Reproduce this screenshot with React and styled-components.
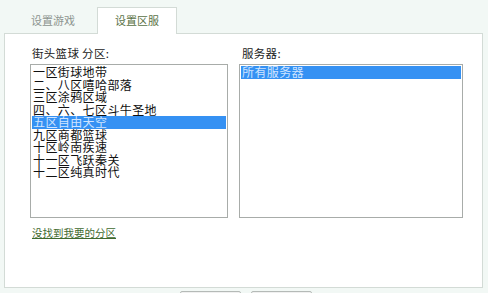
import React, { useState } from 'react';
import styled, { createGlobalStyle } from 'styled-components';

const GlobalStyle = createGlobalStyle`
  html, body {
    margin: 0;
    padding: 0;
    background: #f2f8f5;
    font-family: "Noto Sans CJK SC", "Liberation Sans", sans-serif;
  }
`;

const Page = styled.div`
  width: 488px;
  height: 293px;
  overflow: hidden;
  background: #f2f8f5;
`;

const TabBar = styled.div`
  display: flex;
  align-items: flex-end;
  height: 33px;
  padding-left: 12px;
  gap: 3px;
`;

const Tab = styled.div`
  position: relative;
  width: ${p => (p.$active ? '78px' : '80px')};
  height: ${p => (p.$active ? '24px' : '20px')};
  display: flex;
  align-items: center;
  justify-content: center;
  font-size: 11px;
  color: ${p => (p.$active ? '#5a7246' : '#8c948f')};
  background: ${p => (p.$active ? '#fff' : 'transparent')};
  border: ${p => (p.$active ? '1px solid #d3dbd6' : '1px solid transparent')};
  border-bottom: none;
  margin-bottom: ${p => (p.$active ? '-1px' : '0')};
  padding-bottom: ${p => (p.$active ? '2px' : '3px')};
  box-sizing: content-box;
  z-index: 1;
`;

const Panel = styled.div`
  margin-left: 4px;
  width: 479px;
  height: 255px;
  background: #fff;
  border: 1px solid #d3dbd6;
  padding: 12px 0 0 25px;
  box-sizing: border-box;
  display: flex;
  flex-direction: column;
`;

const Columns = styled.div`
  display: flex;
  gap: 11px;
`;

const Column = styled.div`
  display: flex;
  flex-direction: column;
  width: ${p => p.$width}px;
`;

const Label = styled.div`
  font-size: 11.5px;
  line-height: 15px;
  height: 18px;
  padding-left: ${p => p.$indent || 2}px;
  color: #222;
  letter-spacing: 0.3px;
`;

const ListBox = styled.div`
  height: 154px;
  border: 1px solid #a8aca9;
  background: #fff;
  padding: 1px;
  box-sizing: border-box;
`;

const Item = styled.div`
  font-size: 12px;
  line-height: 12.5px;
  height: 12.5px;
  padding-left: 1px;
  letter-spacing: 0.4px;
  white-space: nowrap;
  color: ${p => (p.$selected ? '#cfe4ff' : '#111')};
  background: ${p => (p.$selected ? '#3591f3' : 'transparent')};
  cursor: default;
`;

const Link = styled.a`
  margin-top: 7px;
  margin-left: 2px;
  font-size: 10.5px;
  color: #3f6a2f;
  text-decoration: underline;
  width: fit-content;
  cursor: pointer;
`;

const Footer = styled.div`
  display: flex;
  gap: 10px;
  padding: 3px 0 0 180px;
`;

const FooterButton = styled.div`
  width: 59px;
  height: 20px;
  border: 1px solid #b5bab7;
  border-radius: 2px;
  background: #f0f0f0;
`;

const zones = [
  '一区街球地带',
  '二、八区嘻哈部落',
  '三区涂鸦区域',
  '四、六、七区斗牛圣地',
  '五区自由天空',
  '九区商都篮球',
  '十区岭南疾速',
  '十一区飞跃秦关',
  '十二区纯真时代',
];

export default function App() {
  const [zone, setZone] = useState(4);
  const [server, setServer] = useState(0);

  return (
    <Page>
      <GlobalStyle />
      <TabBar>
        <Tab>设置游戏</Tab>
        <Tab $active>设置区服</Tab>
      </TabBar>
      <Panel>
        <Columns>
          <Column $width={198}>
            <Label>街头篮球 分区:</Label>
            <ListBox>
              {zones.map((z, i) => (
                <Item key={z} $selected={i === zone} onClick={() => setZone(i)}>
                  {z}
                </Item>
              ))}
            </ListBox>
          </Column>
          <Column $width={224}>
            <Label $indent={3}>服务器:</Label>
            <ListBox>
              <Item $selected={server === 0} onClick={() => setServer(0)}>
                所有服务器
              </Item>
            </ListBox>
          </Column>
        </Columns>
        <Link>没找到我要的分区</Link>
      </Panel>
      <Footer>
        <FooterButton />
        <FooterButton />
      </Footer>
    </Page>
  );
}
